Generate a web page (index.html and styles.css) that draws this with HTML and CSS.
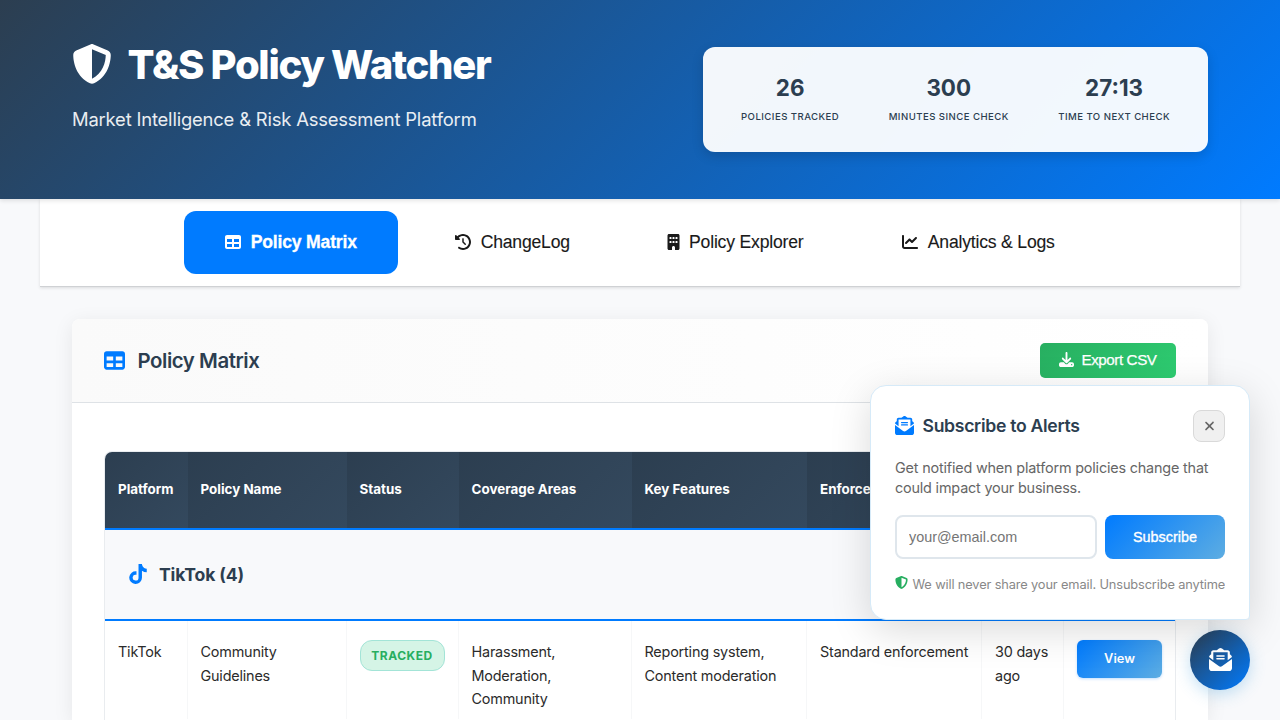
FILE: index.html
```html
<!DOCTYPE html>
<html lang="en">
<head>
<meta charset="utf-8">
<title>T&amp;S Policy Watcher</title>
<link rel="stylesheet" href="styles.css">
</head>
<body>
<svg class="sprite" xmlns="http://www.w3.org/2000/svg">
  <symbol id="shield" viewBox="0 0 512 512"><path fill-rule="evenodd" d="M256 0c4.600 0 9.200 1 13.400 2.900L457.700 82.800c22 9.300 38.400 31 38.300 57.200c-.5 99.200-41.300 280.700-213.600 363.200c-16.700 8-36.100 8-52.800 0C57.300 420.700 16.500 239.200 16 140c-.1-26.200 16.300-47.900 38.300-57.200L242.700 2.900C246.800 1 251.400 0 256 0zm0 66.800V444.800C394 378 431.100 230.100 432 141.400L256 66.800z"/></symbol>
  <symbol id="table" viewBox="0 0 512 512"><path d="M64 256V160H224v96H64zm0 64H224v96H64V320zm224 96V320H448v96H288zM448 256H288V160H448v96zM64 32C28.700 32 0 60.700 0 96V416c0 35.300 28.700 64 64 64H448c35.300 0 64-28.700 64-64V96c0-35.300-28.700-64-64-64H64z"/></symbol>
  <symbol id="history" viewBox="0 0 512 512"><path d="M75 75L41 41C25.900 25.900 0 36.600 0 57.900V168c0 13.300 10.700 24 24 24H134.100c21.400 0 32.100-25.900 17-41l-30.800-30.800C155 85.500 203 64 256 64c106 0 192 86 192 192s-86 192-192 192c-40.800 0-78.600-12.700-109.700-34.400c-14.500-10.100-34.400-6.600-44.600 7.900s-6.600 34.400 7.900 44.600C151.200 495 201.700 512 256 512c141.400 0 256-114.600 256-256S397.400 0 256 0C185.300 0 121.300 28.700 75 75zm181 53c-13.300 0-24 10.700-24 24V256c0 6.400 2.500 12.500 7 17l72 72c9.400 9.400 24.600 9.400 33.900 0s9.400-24.600 0-33.900l-65-65V152c0-13.300-10.700-24-24-24z"/></symbol>
  <symbol id="building" viewBox="0 0 384 512"><path fill-rule="evenodd" d="M48 0C21.500 0 0 21.500 0 48V464c0 26.500 21.500 48 48 48h96V432c0-26.500 21.500-48 48-48s48 21.500 48 48v80h96c26.500 0 48-21.500 48-48V48c0-26.500-21.500-48-48-48H48zM80 224h32q16 0 16 16v32q0 16-16 16H80q-16 0-16-16v-32q0-16 16-16zM176 224h32q16 0 16 16v32q0 16-16 16h-32q-16 0-16-16v-32q0-16 16-16zM272 224h32q16 0 16 16v32q0 16-16 16h-32q-16 0-16-16v-32q0-16 16-16zM80 96h32q16 0 16 16v32q0 16-16 16H80q-16 0-16-16v-32q0-16 16-16zM176 96h32q16 0 16 16v32q0 16-16 16h-32q-16 0-16-16v-32q0-16 16-16zM272 96h32q16 0 16 16v32q0 16-16 16h-32q-16 0-16-16v-32q0-16 16-16z"/></symbol>
  <symbol id="chart" viewBox="0 0 512 512"><path d="M64 64c0-17.700-14.300-32-32-32S0 46.300 0 64V400c0 44.200 35.800 80 80 80H480c17.700 0 32-14.300 32-32s-14.300-32-32-32H80c-8.800 0-16-7.200-16-16V64zm406.600 86.600c12.500-12.500 12.500-32.800 0-45.300s-32.800-12.500-45.300 0L320 210.700l-57.400-57.400c-12.500-12.500-32.800-12.500-45.300 0l-112 112c-12.500 12.500-12.500 32.800 0 45.300s32.800 12.500 45.300 0L240 221.300l57.400 57.400c12.500 12.500 32.800 12.500 45.300 0l128-128z"/></symbol>
  <symbol id="download" viewBox="0 0 512 512"><path d="M288 32c0-17.700-14.300-32-32-32s-32 14.300-32 32V274.700l-73.400-73.400c-12.500-12.500-32.800-12.500-45.300 0s-12.500 32.800 0 45.300l128 128c12.500 12.500 32.800 12.500 45.300 0l128-128c12.500-12.500 12.500-32.800 0-45.300s-32.800-12.500-45.300 0L288 274.700V32zM64 352c-35.300 0-64 28.700-64 64v32c0 35.300 28.700 64 64 64H448c35.300 0 64-28.700 64-64V416c0-35.300-28.700-64-64-64H346.500l-45.300 45.300c-25 25-65.500 25-90.500 0L165.500 352H64zm368 56a24 24 0 1 1 0 48 24 24 0 1 1 0-48z"/></symbol>
  <symbol id="mail" viewBox="0 0 512 512"><path d="M96 96v177.400L.2 202.500c1.600-18.100 10.900-34.900 25.700-45.800L48 140.300V96c0-26.500 21.500-48 48-48h76.600l49.900-36.900C232.200 3.900 243.900 0 256 0s23.800 3.900 33.500 11L339.400 48H416c26.500 0 48 21.500 48 48v44.300l22.100 16.400c14.800 10.900 24.100 27.700 25.700 45.800L416 273.400V96zM0 448V242.100L217.600 403.300c11.100 8.200 24.600 12.700 38.400 12.700s27.300-4.400 38.400-12.700L512 242.100V448c0 35.300-28.700 64-64 64H64c-35.300 0-64-28.700-64-64zM176 160H336c8.800 0 16 7.200 16 16s-7.200 16-16 16H176c-8.800 0-16-7.200-16-16s7.200-16 16-16zm0 64H336c8.800 0 16 7.200 16 16s-7.200 16-16 16H176c-8.800 0-16-7.200-16-16s7.200-16 16-16z"/></symbol>
  <symbol id="close" viewBox="0 0 384 512"><path d="M342.600 150.600c12.500-12.500 12.500-32.800 0-45.300s-32.800-12.500-45.300 0L192 210.700 86.600 105.400c-12.500-12.500-32.800-12.500-45.300 0s-12.500 32.800 0 45.300L146.700 256 41.400 361.400c-12.500 12.500-12.500 32.800 0 45.300s32.800 12.500 45.300 0L192 301.300 297.400 406.600c12.500 12.500 32.800 12.500 45.300 0s12.500-32.800 0-45.300L237.300 256 342.600 150.600z"/></symbol>
  <symbol id="tiktok" viewBox="0 0 448 512"><path d="M448,209.910a210.060,210.060,0,0,1-122.770-39.250V349.380A162.550,162.550,0,1,1,185,188.310V278.200a74.620,74.620,0,1,0,52.230,71.180V0l88,0a121.180,121.180,0,0,0,1.860,22.170h0A122.180,122.180,0,0,0,381,102.390a121.430,121.430,0,0,0,67,20.140Z"/></symbol>
</svg>

<header class="header">
  <div class="brand">
    <h1 class="brand-title"><svg class="brand-icon"><use href="#shield"/></svg><span>T&amp;S Policy Watcher</span></h1>
    <p class="tagline">Market Intelligence &amp; Risk Assessment Platform</p>
  </div>
  <div class="stats">
    <div class="stat"><div class="stat-value">26</div><div class="stat-label">Policies Tracked</div></div>
    <div class="stat"><div class="stat-value">300</div><div class="stat-label">Minutes Since Check</div></div>
    <div class="stat"><div class="stat-value">27:13</div><div class="stat-label">Time to Next Check</div></div>
  </div>
</header>

<nav class="nav">
  <button class="tab tab-matrix active"><svg class="tab-icon"><use href="#table"/></svg><span>Policy Matrix</span></button>
  <button class="tab tab-log"><svg class="tab-icon"><use href="#history"/></svg><span>ChangeLog</span></button>
  <button class="tab tab-explorer"><svg class="tab-icon narrow"><use href="#building"/></svg><span>Policy Explorer</span></button>
  <button class="tab tab-analytics"><svg class="tab-icon"><use href="#chart"/></svg><span>Analytics &amp; Logs</span></button>
</nav>

<main class="card">
  <div class="card-header">
    <h2 class="card-title"><svg class="card-icon"><use href="#table"/></svg><span>Policy Matrix</span></h2>
    <button class="export"><svg class="export-icon"><use href="#download"/></svg><span>Export CSV</span></button>
  </div>
  <div class="card-body">
    <div class="matrix">
      <div class="row head">
        <div class="th">Platform</div><div class="th">Policy Name</div><div class="th">Status</div><div class="th">Coverage Areas</div><div class="th">Key Features</div><div class="th">Enforcement</div><div class="th"></div><div class="th"></div>
      </div>
      <div class="group"><svg class="group-icon"><use href="#tiktok"/></svg><span>TikTok (4)</span></div>
      <div class="row">
        <div class="td">TikTok</div>
        <div class="td">Community<br>Guidelines</div>
        <div class="td"><span class="badge">TRACKED</span></div>
        <div class="td">Harassment,<br>Moderation,<br>Community</div>
        <div class="td">Reporting system,<br>Content moderation</div>
        <div class="td">Standard enforcement</div>
        <div class="td">30 days<br>ago</div>
        <div class="td"><button class="view">View</button></div>
      </div>
    </div>
  </div>
</main>

<aside class="popup">
  <div class="popup-head">
    <h3 class="popup-title"><svg class="popup-icon"><use href="#mail"/></svg><span>Subscribe to Alerts</span></h3>
    <button class="close"><svg class="close-icon"><use href="#close"/></svg></button>
  </div>
  <p class="popup-text">Get notified when platform policies change that could impact your business.</p>
  <div class="form">
    <input class="email" type="email" placeholder="your@email.com">
    <button class="subscribe">Subscribe</button>
  </div>
  <div class="privacy"><svg class="privacy-icon"><use href="#shield"/></svg><span>We will never share your email. Unsubscribe anytime</span></div>
</aside>
<button class="fab"><svg class="fab-icon"><use href="#mail"/></svg></button>
</body>
</html>
```
FILE: styles.css
```css
* { box-sizing: border-box; margin: 0; padding: 0; }
html, body { height: 720px; overflow: hidden; }
body { font-family: Inter, sans-serif; background: #f8f9fb; color: #2b2b2b; }
button { border: 0; font-family: "Liberation Sans", Arial, sans-serif; }
svg { fill: currentColor; flex: none; display: block; }
.sprite { display: none; }

.header { position: relative; z-index: 2; display: flex; justify-content: space-between; align-items: flex-start; height: 199px; padding: 40px 72px 0; color: #fff; background: linear-gradient(135deg, #2c3e50 0%, #007bff 100%); box-shadow: 0 2px 4px rgba(0,0,0,.1); }
.brand-title { display: flex; align-items: center; gap: 15.500px; height: 48px; font-size: 40px; font-weight: 800; letter-spacing: -1.300px; white-space: nowrap; }
.brand-icon { width: 40px; height: 40px; }
.tagline { margin-top: 16px; font-size: 18.400px; line-height: 30px; letter-spacing: -.18px; opacity: .9; white-space: nowrap; }
.stats { display: flex; justify-content: space-between; width: 505px; height: 105px; margin-top: 7px; padding: 24px 38px; border-radius: 12px; background: rgba(255,255,255,.95); color: #2c3e50; box-shadow: 0 4px 12px rgba(0,0,0,.15); }
.stat { text-align: center; }
.stat-value { font-size: 22.400px; line-height: 34px; font-weight: 700; }
.stat-label { margin-top: 5px; font-size: 9.600px; line-height: 14px; font-weight: 500; letter-spacing: .45px; text-transform: uppercase; white-space: nowrap; }

.nav { display: flex; justify-content: center; gap: 16px; width: 1200px; height: 88px; margin: 0 auto; padding-top: 12px; background: #fff; border-bottom: 1px solid #cfd1d4; box-shadow: 0 1px 3px rgba(0,0,0,.12); }
.tab { display: flex; align-items: center; justify-content: center; gap: 9.500px; height: 63px; border-radius: 12px; background: transparent; color: #1a1a1a; font-size: 17.600px; letter-spacing: -.2px; white-space: nowrap; -webkit-text-stroke: .12px currentColor; }
.tab.active { background: #007bff; color: #fff; font-weight: 700; -webkit-text-stroke-width: .3px; }
.tab-matrix { width: 214px; }
.tab-log { width: 197px; }
.tab-explorer { width: 218px; padding-right: 2px; }
.tab-analytics { width: 235px; }
.tab-icon { width: 16px; height: 16px; margin-top: -1px; }
.tab-icon.narrow { width: 13px; }

.card { width: 1136px; height: 401px; margin: 32px auto 0; background: #fff; border-radius: 8px 8px 0 0; box-shadow: 0 4px 20px rgba(0,0,0,.08); }
.card-header { display: flex; align-items: center; justify-content: space-between; height: 84px; padding: 0 32px; border-bottom: 1px solid #dee2e6; border-radius: 8px 8px 0 0; background: linear-gradient(90deg, #fafafa, #fff); }
.card-title { display: flex; align-items: center; gap: 12.500px; color: #2c3e50; font-size: 20.400px; font-weight: 600; letter-spacing: -.450px; }
.card-icon { width: 21px; height: 21px; color: #007bff; }
.export { display: flex; align-items: center; justify-content: center; gap: 7px; width: 136px; height: 35px; padding-bottom: 2px; border-radius: 5px; color: #fff; font-size: 15.200px; letter-spacing: -.42px; -webkit-text-stroke: .25px currentColor; background: linear-gradient(135deg, #27ae60, #2ecc71); }
.export-icon { width: 15px; height: 15px; }
.card-body { padding: 48px 32px 0; }
.matrix { height: 269px; border: 1px solid #e9ecef; border-bottom: 0; border-radius: 8px 8px 0 0; overflow: hidden; }
.row { display: grid; grid-template-columns: 82.500px 159px 112px 173px 175.500px 175px 82px 1fr; }
.th { height: 76px; padding: 0 13px; line-height: 75px; font-size: 13.400px; font-weight: 700; color: #fff; background: linear-gradient(135deg, #2c3e50, #34495e); white-space: nowrap; }
.head { border-bottom: 2px solid #007bff; }
.group { display: flex; align-items: center; gap: 12px; height: 91px; padding-left: 24px; border-bottom: 2px solid #007bff; background: #f8f9fb; color: #2c3e50; font-size: 17.600px; font-weight: 700; letter-spacing: -.15px; }
.group-icon { width: 18px; height: 20px; margin-top: -2px; color: #007bff; }
.td { height: 98px; padding: 19px 12px 0 13px; border-right: 1px solid #f6f7f8; font-size: 14.400px; line-height: 23.700px; letter-spacing: -.19px; white-space: nowrap; }
.td:last-child { border-right: 0; }
.badge { display: flex; align-items: center; justify-content: center; width: 85px; height: 31px; border: 1px solid #a3e4d7; border-radius: 12px; background: #d5f4e6; color: #27ae60; font-size: 12px; font-weight: 700; letter-spacing: .52px; }
.view { display: block; width: 85px; height: 38px; padding-bottom: 1px; border-radius: 6px; color: #fff; font: 600 12.800px Inter, sans-serif; background: linear-gradient(135deg, #007bff, #5dade2); box-shadow: 0 1px 3px rgba(0,123,255,.25); }

.popup { position: absolute; z-index: 5; left: 870px; top: 385px; width: 380px; height: 235px; padding: 24px; border: 1px solid #d6eaf8; border-radius: 16px 16px 4px 16px; background: #fff; box-shadow: 0 10px 40px rgba(0,0,0,.15); }
.popup-head { display: flex; align-items: center; justify-content: space-between; height: 32px; }
.popup-title { display: flex; align-items: center; gap: 8.500px; height: 30px; margin-bottom: 2px; color: #2c3e50; font-size: 17.600px; font-weight: 600; letter-spacing: -.3px; white-space: nowrap; }
.popup-icon { width: 19px; height: 19px; color: #007bff; }
.close { display: flex; align-items: center; justify-content: center; width: 32px; height: 32px; border: 1px solid #d9d9d9; border-radius: 8px; background: #f0f0f0; color: #666; }
.close-icon { width: 11px; height: 14px; }
.popup-text { margin-top: 16px; font-size: 14.400px; line-height: 20px; letter-spacing: -.18px; color: #666; }
.form { display: flex; gap: 8px; margin-top: 17px; }
.email { width: 202px; height: 44px; padding: 0 12px; border: 2px solid #dfe6ec; border-radius: 8px; font-family: "Liberation Sans", Arial, sans-serif; font-size: 14.400px; }
.email::placeholder { color: #757575; }
.subscribe { width: 120px; height: 44px; border-radius: 8px; color: #fff; font-size: 14.400px; -webkit-text-stroke: .35px currentColor; background: linear-gradient(135deg, #007bff, #5dade2); }
.privacy { display: flex; align-items: center; gap: 4.500px; height: 20px; margin-top: 15px; color: #888; font-size: 12.800px; letter-spacing: -.13px; white-space: nowrap; overflow: hidden; }
.privacy-icon { width: 13px; height: 13px; margin-top: -3px; color: #27ae60; }
.fab { position: absolute; z-index: 4; left: 1190px; top: 630px; display: flex; align-items: center; justify-content: center; width: 60px; height: 60px; padding-bottom: 1px; border-radius: 50%; color: #fff; background: linear-gradient(135deg, #2c3e50, #007bff); box-shadow: 0 4px 16px rgba(52,152,219,.3); }
.fab-icon { width: 23px; height: 23px; }
```
